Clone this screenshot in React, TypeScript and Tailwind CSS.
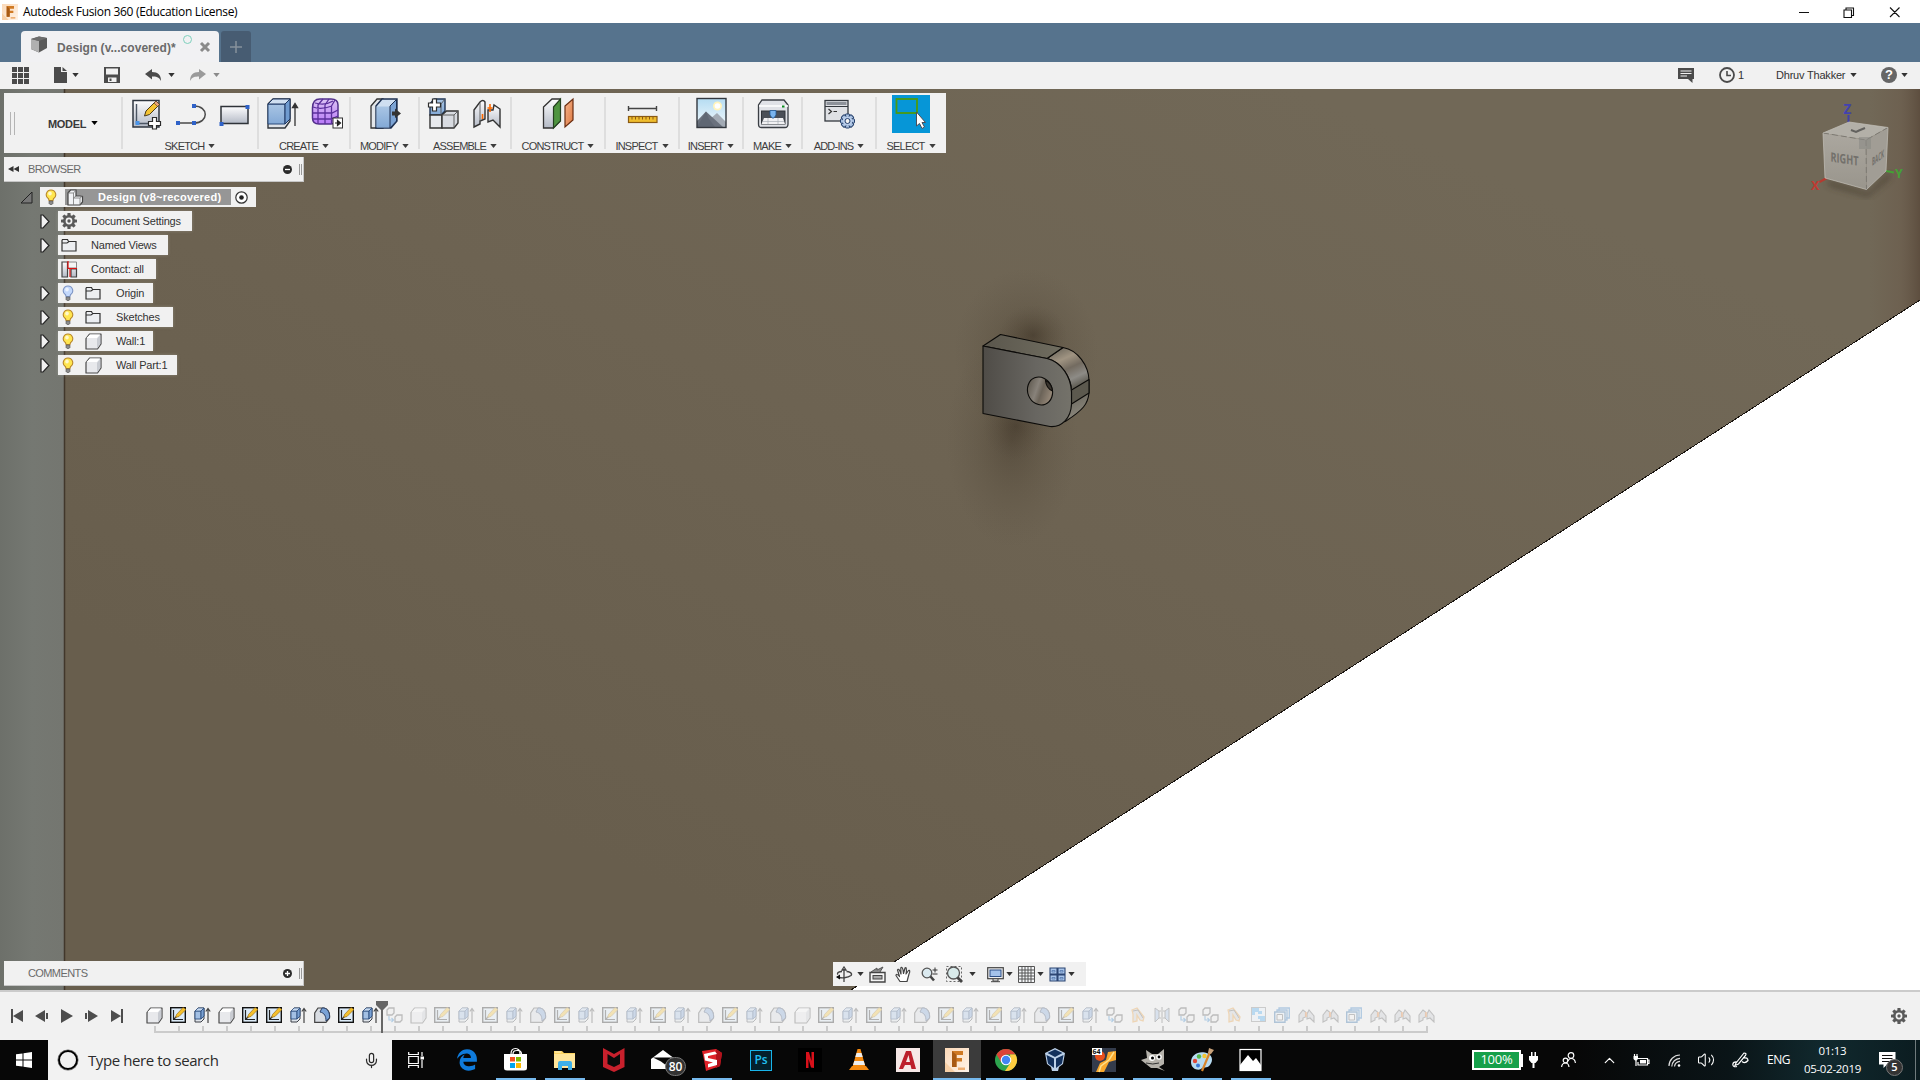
import React from 'react';
import { FaEdgeLegacy } from 'react-icons/fa';
import { Volume2, ChevronUp, Mic } from 'lucide-react';

type P = { className?: string };

const Caret = ({ className = '' }: P) => (
  <svg className={'shrink-0 ' + className} width="7" height="4" viewBox="0 0 7 4"><path d="M.3 0H6.700L3.500 4Z" fill="currentColor" /></svg>
);

const Gear = ({ size = 16 }: { size?: number }) => (
  <svg width={size} height={size} viewBox="-8 -8 16 16">
    <g fill="#5a5a5a">
      {[0, 45, 90, 135].map((a) => <rect key={a} x="-1.6" y="-8" width="3.2" height="16" rx="0.6" transform={`rotate(${a})`} />)}
      <circle r="6" />
    </g>
    <circle r="3.4" fill="#f1f1f1" />
    <circle r="1.7" fill="#5a5a5a" />
  </svg>
);

/* ---------- shared gradients ---------- */
const Defs = () => (
  <svg width="0" height="0" className="absolute">
    <defs>
      <linearGradient id="steel" x1="0" y1="0" x2="0" y2="1"><stop offset="0" stopColor="#fdfdfe" /><stop offset="1" stopColor="#b4bac6" /></linearGradient>
      <linearGradient id="blue" x1="0" y1="0" x2="0" y2="1"><stop offset="0" stopColor="#a9c5e4" /><stop offset="1" stopColor="#83a9d6" /></linearGradient>
      <linearGradient id="purple" x1="0" y1="0" x2="0" y2="1"><stop offset="0" stopColor="#dcc4f4" /><stop offset="1" stopColor="#b878f8" /></linearGradient>
      <linearGradient id="sky" x1="0" y1="0" x2="0" y2="1"><stop offset="0" stopColor="#b5dcf2" /><stop offset="1" stopColor="#f4fafd" /></linearGradient>
      <linearGradient id="orange" x1="0" y1="0" x2="1" y2="1"><stop offset="0" stopColor="#f6b48c" /><stop offset="1" stopColor="#dc7840" /></linearGradient>
      <linearGradient id="fusion" x1="0" y1="0" x2="1" y2="1"><stop offset="0" stopColor="#fbd9b8" /><stop offset="1" stopColor="#fff3e8" /></linearGradient>
    </defs>
  </svg>
);

/* ---------- ribbon icons (30 x 32) ---------- */
const R = ({ children, w = 30 }: { children: React.ReactNode; w?: number }) => (
  <svg width={w} height="32" viewBox={`0 0 ${w} 32`} className="overflow-visible">{children}</svg>
);
const NewSketch = () => (
  <R>
    <path d="M2 3.500H28V30H2Z" fill="url(#steel)" stroke="#2f3640" strokeWidth="1.5" />
    <path d="M5.5 7V26.5H20" fill="none" stroke="#4b5563" strokeWidth="1.4" />
    <rect x="4.5" y="24" width="4" height="4" fill="#4a94e8" />
    <path d="M15 14L25 4L28.5 7.5L18.5 17.5L13.5 19Z" fill="#f5c432" stroke="#4a3a18" strokeWidth="1" />
    <path d="M25 4L28.5 7.5L26.5 9.5L23 6Z" fill="#e9a37c" stroke="#4a3a18" strokeWidth=".6" />
    <path d="M21.5 20.5H25.5V24.5H29.5V28.5H25.5V32H21.5V28.5H17.5V24.5H21.5Z" fill="#fff" stroke="#2c2c2c" strokeWidth="1.2" />
  </R>
);
const LineArc = () => (
  <R>
    <path d="M3 26H19M19 9C34 9 34 26 19 26" fill="none" stroke="#4a4a4a" strokeWidth="1.5" />
    <path d="M1 24H5V28H1ZM17 24H21V28H17ZM17 7H21V11H17Z" fill="#2f62c8" />
  </R>
);
const Rect = () => (
  <R>
    <rect x="2" y="9.500" width="27" height="17" fill="url(#steel)" stroke="#2f3338" strokeWidth="1.5" />
    <path d="M.5 25H4.500V29H.5ZM26.500 8H30.500V12H26.500Z" fill="#2f62c8" />
  </R>
);
const Extrude = () => (
  <R>
    <path d="M1 7L6 2H23V24L18 31H1Z" fill="#dfe3e8" stroke="#33383e" strokeWidth="1.4" />
    <path d="M1 7H18V27H1Z" fill="url(#blue)" stroke="#2a4a7a" strokeWidth="1" />
    <path d="M1 7L6 2H23L18 7Z" fill="#cfdff1" stroke="#1c3560" strokeWidth="1" />
    <path d="M18 7L23 2V22L18 27Z" fill="#6f9bd0" stroke="#1c3560" strokeWidth="1" />
    <path d="M28 29V8M25.500 10.500L28 6.500L30.500 10.500Z" stroke="#333" strokeWidth="1.300" fill="#333" />
  </R>
);
const Form = () => (
  <R>
    <path d="M1.500 11Q1.500 2 9 2H20Q27 2 27 8V20Q27 27 20 27H8Q1.500 27 1.500 21Z" fill="url(#purple)" stroke="#52308a" strokeWidth="1.500" />
    <path d="M2 10Q10 13 21 9M2 16H21L27 13M2 22H20L27 19M7 7V27M14 8V27M20.500 9V27M4 6Q14 9 22 4M12 2L7 8M18 2L14 8M24 3L20.500 9" fill="none" stroke="#5b2f9c" strokeWidth="1.300" />
    <rect x="22" y="21" width="9.500" height="10" fill="#fff" stroke="#333" strokeWidth="1" />
    <path d="M24 26H28M26.500 23.500L29.500 26L26.500 28.500Z" stroke="#222" strokeWidth="1.200" fill="#222" />
  </R>
);
const PressPull = () => (
  <R>
    <path d="M1 9L7 2H13V31H1Z" fill="#e3e6ea" stroke="#333" strokeWidth="1.300" />
    <path d="M6 9L12 2H27V24L21 31H6Z" fill="#cfdff1" stroke="#1c2f50" strokeWidth="1.400" />
    <path d="M6.500 9.500H20V30.500H6.500Z" fill="url(#blue)" />
    <path d="M20 9L26.500 2.500V24L20 31Z" fill="#7ba3d4" stroke="#1c2f50" strokeWidth="1" />
    <path d="M22 14.500H25V11.500L31 16.500L25 21V18.500H22Z" fill="#333" />
  </R>
);
const NewComponent = () => (
  <R>
    <path d="M2 7L6 2H17V14L13 18H2Z" fill="url(#blue)" stroke="#1f3454" strokeWidth="1.400" />
    <path d="M2 18H14V31H2Z" fill="#e7e9ed" stroke="#333" strokeWidth="1.400" />
    <path d="M14 18L18.500 14H30V26L26 31H14Z" fill="#d8dbe1" stroke="#333" strokeWidth="1.400" />
    <path d="M14 18H26V31M26 18L30 14M13 7V18M13 7L17 2" fill="none" stroke="#555" strokeWidth=".9" />
    <path d="M4.500 2H8.500V6H12.500V10H8.500V14H4.500V10H.5V6H4.500Z" fill="#fff" stroke="#2c2c2c" strokeWidth="1.200" />
  </R>
);
const Joint = () => (
  <R>
    <path d="M2 13L8 5Q11 2 13 5V22L8 24V27L2 30Z" fill="url(#steel)" stroke="#333" strokeWidth="1.400" />
    <path d="M16 13H21L22 8L28 12V30L21 23L16 25Z" fill="url(#steel)" stroke="#333" strokeWidth="1.400" />
    <path d="M8 6V24" stroke="#666" />
    <path d="M18 7V15M15.500 11H20.500M10.500 17V22" stroke="#ff6a00" strokeWidth="1.600" />
  </R>
);
const Construct = () => (
  <R w={32}>
    <path d="M1.500 10L10 2H18V24L11 31H1.500Z" fill="url(#steel)" stroke="#333" strokeWidth="1.300" />
    <path d="M11.500 10L18.500 2V24L11.500 31Z" fill="#4e9440" stroke="#24401f" strokeWidth="1.200" />
    <path d="M23 9L31 2V23L23 30Z" fill="url(#orange)" stroke="#6a2c10" strokeWidth="1.200" />
  </R>
);
const Inspect = () => (
  <R>
    <path d="M1.500 11.500H29.500M1.500 9V14M29.500 9V14" stroke="#444" strokeWidth="1.400" />
    <rect x="1.500" y="19.500" width="28.500" height="6" fill="#efbd2d" stroke="#8a5a14" strokeWidth="1.200" />
    <path d="M5 20V22.500M8.500 20V22.500M12 20V22.500M15.500 20V22.500M19 20V22.500M22.500 20V22.500M26 20V22.500" stroke="#8a5a14" />
  </R>
);
const Insert = () => (
  <R>
    <rect x="1" y="1.500" width="29" height="29" fill="url(#sky)" />
    <circle cx="21.500" cy="9" r="4.500" fill="#fff4bd" /><circle cx="21.500" cy="9" r="2.800" fill="#fff" />
    <path d="M14 22L21 16L30 25V30H14Z" fill="#a3abb5" />
    <path d="M1 24L10 14.500L27 30H1Z" fill="#6a717d" />
    <path d="M10 14.500L13 22L19 30H1Z" fill="#59606c" opacity=".6" />
    <rect x="1" y="1.500" width="29" height="29" fill="none" stroke="#33383f" strokeWidth="1.400" />
  </R>
);
const Make = () => (
  <R>
    <path d="M4 3H26L30 8V27Q30 30.500 27 30.500H3Q.5 30.500 .5 27V8Z" fill="#e0e2e7" stroke="#3b3f45" strokeWidth="1.300" />
    <path d="M1 9H30" stroke="#fff" strokeWidth="1.500" />
    <rect x="3.500" y="14" width="23.500" height="13" fill="#4a4f57" stroke="#30343a" />
    <path d="M6 21H25L27 27H3.500Z" fill="#f1f1f3" />
    <path d="M12 13.500H18V18L16 21H14L12 18Z" fill="#79b4ee" stroke="#255a95" strokeWidth=".8" />
    <path d="M5 24.500H26M10 21V27M20 21V27" stroke="#a8adb5" strokeWidth=".7" />
    <rect x="24" y="8.500" width="2.500" height="2" fill="#0a8a1e" />
  </R>
);
const AddIns = () => (
  <R>
    <rect x="1" y="3.500" width="23" height="20.500" fill="#dfe1e5" stroke="#33383e" strokeWidth="1.300" />
    <rect x="2.500" y="5" width="20" height="3" fill="#8d929a" /><path d="M1 9.500H24" stroke="#33383e" />
    <path d="M4.500 12L7.500 14.500L4.500 17M9.500 14.500H13" fill="none" stroke="#333" strokeWidth="1.200" />
    <g transform="translate(23.500 24)">
      {[0, 45, 90, 135].map((a) => <rect key={a} x="-2.200" y="-7" width="4.400" height="14" rx="1" fill="#a8c0e0" stroke="#25406c" strokeWidth="1" transform={`rotate(${a})`} />)}
      <circle r="4.800" fill="#b9cdea" /><circle r="2.500" fill="#f1f1f1" stroke="#25406c" strokeWidth="1" />
    </g>
  </R>
);
const Select = () => (
  <div className="-mb-[4px] -mt-[2px] h-[38px] w-[38px] bg-[#0696d7]">
    <svg width="38" height="38" viewBox="0 0 38 38">
      <rect x="4.500" y="4" width="20.500" height="14" fill="none" stroke="#4c9a10" strokeWidth="1.800" />
      <path d="M24.500 17V31L27.500 28.500L30 33.500L32.500 32L30 27.500H33.500Z" fill="#fff" stroke="#4a4f5a" strokeWidth="1" />
    </svg>
  </div>
);

const groups: { name: string; w: string; icons: React.ReactNode[] }[] = [
  { name: 'SKETCH', w: 'w-[136px]', icons: [<NewSketch />, <LineArc />, <Rect />] },
  { name: 'CREATE', w: 'w-[92px]', icons: [<Extrude />, <Form />] },
  { name: 'MODIFY', w: 'w-[69px]', icons: [<PressPull />] },
  { name: 'ASSEMBLE', w: 'w-[92px]', icons: [<NewComponent />, <Joint />] },
  { name: 'CONSTRUCT', w: 'w-[94px]', icons: [<Construct />] },
  { name: 'INSPECT', w: 'w-[74px]', icons: [<Inspect />] },
  { name: 'INSERT', w: 'w-[64px]', icons: [<Insert />] },
  { name: 'MAKE', w: 'w-[59px]', icons: [<Make />] },
  { name: 'ADD-INS', w: 'w-[74px]', icons: [<AddIns />] },
  { name: 'SELECT', w: 'w-[70px]', icons: [<Select />] },
];

const Ribbon = () => (
  <div className="absolute left-1 top-1 flex h-[60px] w-[942px] bg-[#f1f1f1]">
    <div className="flex w-[117px] items-center">
      <div className="ml-1.5 h-[23px] w-[5px] border-x border-[#b4b4b4]" />
      <span className="ml-[33px] mt-0.5 text-[11px] font-bold tracking-[-0.3px] text-[#3a3a3a]">MODEL</span>
      <Caret className="ml-[5px]" />
    </div>
    {groups.map((g) => (
      <div key={g.name} className={'relative flex flex-col items-center pl-[2px] pt-1 ' + g.w}>
        <div className="absolute left-0 top-1 h-[52px] w-[2px] bg-[#dedede]" />
        <div className="flex h-8 gap-[14px]">{g.icons.map((ic, i) => <React.Fragment key={i}>{ic}</React.Fragment>)}</div>
        <div className="mt-[10px] flex items-center gap-1 text-[11px] leading-[14px] tracking-[-0.8px] text-[#3d3d3d]">{g.name}<Caret /></div>
      </div>
    ))}
  </div>
);

/* ---------- browser tree ---------- */
const Bulb = ({ off }: { off?: boolean }) => (
  <svg width="12" height="16" viewBox="0 0 12 16">
    <path d="M6 1A4.700 4.700 0 0 0 3.500 9.700L4 11.500H8L8.500 9.700A4.700 4.700 0 0 0 6 1Z" fill={off ? '#c3d8fb' : '#ffe650'} stroke={off ? '#7d94c4' : '#b8862a'} strokeWidth="1.100" />
    <ellipse cx="5" cy="4.500" rx="1.800" ry="2" fill="#fff" opacity=".7" />
    <path d="M4 12H8V14.500L7 15.500H5L4 14.500Z" fill="#8a8a8a" stroke="#555" strokeWidth=".6" />
  </svg>
);
const Folder = () => (
  <svg width="16" height="16" viewBox="0 0 16 16"><path d="M1 3.500V14H15V4.500H7.500L6.500 2.500H1.500ZM1 6H6L8 4.500" fill="#eceef1" stroke="#333" strokeWidth="1.200" /></svg>
);
const Box = () => (
  <svg width="17" height="17" viewBox="0 0 17 17">
    <path d="M1 5.500L4.500 1H16V11L12.500 16H1Z" fill="#e8e9ec" stroke="#4a4a4a" strokeWidth="1.200" strokeLinejoin="round" />
    <path d="M1.500 5L5 1.500H15L12 5Z" fill="#fff" /><path d="M12 5.500V15.500L15.300 11V2Z" fill="#c9ccd2" />
  </svg>
);
const Contact = () => (
  <svg width="17" height="17" viewBox="0 0 17 17">
    <path d="M1 1H6.500V16H1ZM10 8H15.500V16H10Z" fill="url(#steel)" stroke="#444" strokeWidth="1.200" />
    <path d="M7 1H15.500V7H7" fill="#f5f5f5" stroke="#888" /><path d="M7 0V7.500H16M9 8V16" fill="none" stroke="#e01010" strokeWidth="1.200" />
  </svg>
);
const Assembly = () => (
  <svg width="17" height="17" viewBox="0 0 17 17">
    <path d="M1 4L3.500 1H9V7H13L15.500 7.500V13L13 16H1Z" fill="#f2f3f5" stroke="#444" strokeWidth="1.200" /><path d="M6.500 16V9L9 7M1 4H6.500V9H13V16M13 9L15.500 7M6.500 4L9 1" fill="none" stroke="#777" strokeWidth=".8" />
  </svg>
);
const rows: { label: string; w: string; icon: React.ReactNode; bulb?: 'on' | 'off'; leaf?: boolean }[] = [
  { label: 'Document Settings', w: 'w-[134px]', icon: <Gear /> },
  { label: 'Named Views', w: 'w-[110px]', icon: <Folder /> },
  { label: 'Contact: all', w: 'w-[98px]', icon: <Contact />, leaf: true },
  { label: 'Origin', w: 'w-[95px]', icon: <Folder />, bulb: 'off' },
  { label: 'Sketches', w: 'w-[115px]', icon: <Folder />, bulb: 'on' },
  { label: 'Wall:1', w: 'w-[95px]', icon: <Box />, bulb: 'on' },
  { label: 'Wall Part:1', w: 'w-[119px]', icon: <Box />, bulb: 'on' },
];

const PanelBar = ({ title, open, className }: { title: string; open?: boolean; className: string }) => (
  <div className={'absolute left-1 flex h-[25px] w-[300px] items-center border-b border-r border-[#c6c6c6] bg-[#f1f1f1] ' + className}>
    <div className="ml-1 flex w-5">
      {open && <svg width="11" height="6" viewBox="0 0 11 6"><path d="M5.500 0V6L0 3ZM11 0V6L5.500 3Z" fill="#333" /></svg>}
    </div>
    <span className="text-[11px] tracking-[-0.6px] text-[#6a6a6a]">{title}</span>
    <svg className="ml-auto mr-[7px]" width="9" height="9" viewBox="0 0 9 9"><circle cx="4.500" cy="4.500" r="4.500" fill="#2b2b2b" /><path d={open ? 'M2 4.500H7' : 'M2 4.500H7M4.500 2V7'} stroke="#fff" strokeWidth="1.300" /></svg>
    <div className="mr-px h-[11px] w-[3px] border-x border-[#999]" />
  </div>
);

const Browser = () => (
  <div className="absolute left-0 top-[98px] flex w-[304px] flex-col gap-1 text-[11px] tracking-[-0.18px] text-[#333]">
    <div className="flex h-5 items-center">
      <svg className="ml-5" width="13" height="13" viewBox="0 0 13 13"><path d="M12 1V12H1Z" fill="#777" stroke="#222" /></svg>
      <div className="ml-[7px] flex h-5 w-[216px] items-center bg-[#f1f1f1]">
        <div className="ml-[5px]"><Bulb /></div>
        <div className="ml-[8px] flex h-4 w-[166px] items-center bg-[#969696]">
          <div className="ml-0.5"><Assembly /></div>
          <span className="ml-[14px] font-bold tracking-[0.24px] whitespace-nowrap text-white">Design (v8~recovered)</span>
        </div>
        <svg className="ml-1" width="13" height="13" viewBox="0 0 13 13"><circle cx="6.500" cy="6.500" r="5.700" fill="#fff" stroke="#333" strokeWidth="1.200" /><circle cx="6.500" cy="6.500" r="2.300" fill="#222" /></svg>
      </div>
    </div>
    {rows.map((r) => (
      <div key={r.label} className="flex h-5 items-center">
        <div className="ml-[40px] w-[18px]">
          {!r.leaf && <svg width="10" height="15" viewBox="0 0 10 15"><path d="M1 1H3L9 7.500L3 14H1Z" fill="#f1f1f1" stroke="#222" strokeWidth="1.200" /></svg>}
        </div>
        <div className={'flex h-5 items-center bg-[#f1f1f1] shadow-[0_0_3px_rgba(200,200,190,0.35)] ' + r.w}>
          {r.bulb && <div className="ml-[4px] w-[20px]"><Bulb off={r.bulb === 'off'} /></div>}
          <div className="ml-[3px] flex w-[17px]">{r.icon}</div>
          <span className={'whitespace-nowrap ' + (r.bulb ? 'ml-[14px]' : 'ml-[13px]')}>{r.label}</span>
        </div>
      </div>
    ))}
  </div>
);

/* ---------- 3D scene ---------- */
const Scene = () => (
  <svg className="block" width="1920" height="901" viewBox="0 89 1920 901">
    <defs>
      <linearGradient id="wall" gradientUnits="userSpaceOnUse" x1="1300" y1="89" x2="900" y2="990"><stop offset="0" stopColor="#716857" /><stop offset=".5" stopColor="#6d6352" /><stop offset="1" stopColor="#685e4d" /></linearGradient>
      <linearGradient id="wallR" x1="0" x2="1"><stop offset="0" stopColor="#6a5a4a" stopOpacity="0" /><stop offset=".6" stopColor="#6a5a4a" stopOpacity=".5" /><stop offset="1" stopColor="#5a4a3b" stopOpacity=".85" /></linearGradient>
      <linearGradient id="side" x1="0" x2="1"><stop offset="0" stopColor="#6d706a" /><stop offset=".5" stopColor="#757872" /><stop offset="1" stopColor="#747670" /></linearGradient>
      <radialGradient id="sh"><stop offset="0" stopColor="#3a2f22" stopOpacity=".8" /><stop offset=".5" stopColor="#453a2b" stopOpacity=".35" /><stop offset="1" stopColor="#51463a" stopOpacity="0" /></radialGradient>
      <linearGradient id="front" x1="0" x2="1"><stop offset="0" stopColor="#4f4c47" /><stop offset=".6" stopColor="#686661" /><stop offset="1" stopColor="#74726a" /></linearGradient>
      <linearGradient id="topf" x1="0" x2="1"><stop offset="0" stopColor="#5a564c" /><stop offset="1" stopColor="#706d60" /></linearGradient>
      <linearGradient id="round" gradientUnits="userSpaceOnUse" x1="1052" y1="350" x2="1082" y2="415"><stop offset="0" stopColor="#6b665b" /><stop offset=".18" stopColor="#a09482" /><stop offset=".33" stopColor="#736b60" /><stop offset=".48" stopColor="#8d8b86" /><stop offset=".6" stopColor="#625f56" /><stop offset="1" stopColor="#8b877c" /></linearGradient>
      <linearGradient id="hole" x1="0" y1="0" x2="1" y2="1"><stop offset=".1" stopColor="#5d574d" /><stop offset=".4" stopColor="#88827a" /><stop offset=".55" stopColor="#6b6358" /><stop offset=".8" stopColor="#918475" /><stop offset="1" stopColor="#75695c" /></linearGradient>
      <filter id="soft"><feGaussianBlur stdDeviation="3" /></filter>
      <linearGradient id="cube" x1="0" y1="0" x2="0" y2="1"><stop offset="0" stopColor="#aba79f" /><stop offset="1" stopColor="#99958c" /></linearGradient>
    </defs>
    <rect y="89" width="1920" height="901" fill="#fff" />
    <path d="M0 89H1920V300L928 940L851 990H0Z" fill="url(#wall)" />
    <path d="M1870 89H1920V300L1870 332Z" fill="url(#wallR)" />
    <path d="M1920 300L928 940L851 990" fill="none" stroke="#1a1510" strokeWidth="1" shapeRendering="crispEdges" />
    <rect y="89" width="64" height="901" fill="url(#side)" />
    <path d="M64.500 89V990" stroke="#41372b" strokeWidth="1.500" />

    <ellipse cx="1026" cy="352" rx="72" ry="84" fill="url(#sh)" opacity=".5" />
    <ellipse cx="1033" cy="335" rx="34" ry="30" fill="url(#sh)" opacity=".6" />
    <ellipse cx="1012" cy="440" rx="66" ry="108" fill="url(#sh)" opacity=".5" />
    <ellipse cx="1016" cy="426" rx="34" ry="34" fill="url(#sh)" opacity=".5" />
    <g stroke="#0c0b09" strokeWidth="1.100" strokeLinejoin="round">
      <path d="M1047 358.500L1063 347.500C1078 350 1088.500 366 1089 380V393C1088 404 1083 410 1066 421C1060 425 1071 410 1071.500 404V390C1071 378 1062 362 1047 358.500Z" fill="url(#round)" />
      <path d="M1071.500 390L1089 379.500V393L1071.500 404Z" fill="#5c594e" />
      <path d="M983 346L1000.500 334.500L1063 347.500L1047 358.500Z" fill="url(#topf)" />
      <path d="M983 346L1047 358.500C1062 362 1071 378 1071.500 392V404C1071 418 1062 427.500 1050 426.500L983 413.500Z" fill="url(#front)" />
      <ellipse cx="1040" cy="391" rx="12.300" ry="14.200" transform="rotate(-22 1040 391)" fill="url(#hole)" />
      <path d="M1045.500 380.500C1046 386 1049 389.500 1052.500 391C1052 386 1049 382 1045.500 380.500Z" fill="#3a352e" />
    </g>

    <path d="M1826 180L1868 193L1890 172L1890 178L1868 197L1830 186Z" fill="#3b3226" opacity=".6" filter="url(#soft)" />
    <path d="M1848.500 115V123" stroke="#4040a8" strokeWidth="2" />
    <path d="M1819.500 182L1827 178" stroke="#b53a30" strokeWidth="2" />
    <path d="M1886 171L1894 172.500" stroke="#45a035" strokeWidth="2" />
    <path d="M1823 133L1849 122L1888 127.500L1866 140Z" fill="#b3b0a8" />
    <path d="M1823 133L1866 140L1866.500 189.500L1825 178Z" fill="url(#cube)" />
    <path d="M1866 140L1888 127.500L1886 171L1866.500 189.500Z" fill="#a19d95" />
    <path d="M1823 133L1866 140L1888 127.500M1866 140L1866.500 189.500" fill="none" stroke="#7d7a73" strokeDasharray="6 3" />
    <path d="M1823 133L1849 122L1888 127.500L1886 171L1866.500 189.500L1825 178Z" fill="none" stroke="#c4c1ba" strokeWidth=".7" />
    <path d="M1859 137H1871V149H1859Z" fill="#8b8a85" opacity=".6" />
    <path d="M1851 130L1856 132L1859 130.500L1865 128" stroke="#62615e" strokeWidth="2" fill="none" />
    <g fontFamily="Open Sans, sans-serif" fontWeight="700">
      <text transform="matrix(1 .15 0 1 1830.500 161.500)" fontSize="13" fill="#72706b" textLength="28" lengthAdjust="spacingAndGlyphs">RIGHT</text>
      <text transform="matrix(.8 -.6 0 1 1872 166)" fontSize="11" fill="#72706b" textLength="15" lengthAdjust="spacingAndGlyphs">BACK</text>
      <text x="1843.500" y="114" fontSize="13.500" fill="#4242b0">Z</text>
      <text x="1811" y="189.500" fontSize="12.500" fill="#c03a32">X</text>
      <text x="1895" y="178" fontSize="12.500" fill="#46a038">Y</text>
    </g>
  </svg>
);

/* ---------- navigation bar ---------- */
const N = ({ w, ml = '', children }: { w: string; ml?: string; children: React.ReactNode }) => <div className={`flex shrink-0 justify-center ${w} ${ml}`}>{children}</div>;
const NavBar = () => (
  <div className="absolute left-[833px] top-[873px] flex h-6 w-[253px] items-center bg-[#f1f1f1] text-[#333]">
    <N w="w-[22px]"><svg width="17" height="17" viewBox="0 0 17 17"><path d="M8 16V3M6 4L8 1L10 4Z" fill="#fff" stroke="#444" strokeWidth="1.300" /><path d="M1 11C5 12.500 12 12 15 9.500C17 7 13 5.500 10.500 5.500M6 5.500C3 5.500 .5 7 2 8.500" fill="none" stroke="#444" strokeWidth="1.400" /><path d="M0 11L4 8.500V13.500Z" fill="#111" /></svg></N>
    <N w="w-[10px]"><Caret /></N>
    <N w="w-[24px]"><svg width="17" height="17" viewBox="0 0 17 17"><path d="M1 6.500H16V16H1Z" fill="#f6f6f6" stroke="#444" strokeWidth="1.400" /><rect x="4" y="9.500" width="9" height="3.500" fill="#aaa" stroke="#444" /><path d="M2 6L8 2V4L14 1L11 6" fill="#888" stroke="#555" /></svg></N>
    <N w="w-[28px]"><svg width="17" height="17" viewBox="0 0 17 17"><path d="M5 15.500L1 9.500C1 8 2.500 8 4.500 10.500L2.500 4C3 2.500 4.500 3 6 8L5.800 2C6.500 .5 8 1 8.500 7.500L10 2C11 1 12 2 11 8L13.500 4.500C14.500 4 15.500 5 14 8L12 15.500Z" fill="#fff" stroke="#444" strokeWidth="1.200" strokeLinejoin="round" /></svg></N>
    <N w="w-[24px]"><svg width="17" height="17" viewBox="0 0 17 17"><circle cx="6" cy="7" r="4.800" fill="#dbeaf0" stroke="#555" strokeWidth="1.300" /><path d="M9.500 10.500L13 14.500" stroke="#444" strokeWidth="2.600" /><path d="M11.500 4H16.500M14 1.500V6.500M11.500 8H16.500" stroke="#333" /></svg></N>
    <N w="w-[27px]"><svg width="17" height="17" viewBox="0 0 17 17"><rect x=".5" y=".5" width="15" height="15" fill="none" stroke="#666" strokeDasharray="2 2" /><circle cx="7.500" cy="7" r="6" fill="#d8eaea" stroke="#555" strokeWidth="1.300" /><path d="M11.500 11.500L16 16" stroke="#444" strokeWidth="2.800" /></svg></N>
    <N w="w-2"><Caret /></N>
    <N w="w-[18px]" ml="ml-[10px]"><svg width="17" height="17" viewBox="0 0 17 17"><rect x=".7" y="1.700" width="15.600" height="11" fill="#eee" stroke="#444" strokeWidth="1.200" /><rect x="3" y="4" width="11" height="6.500" fill="#a4c2ea" stroke="#2c4f86" /><path d="M6 13V15H11V13M4 15.700H13" stroke="#444" fill="none" /></svg></N>
    <N w="w-2" ml="ml-px"><Caret /></N>
    <N w="w-[18px]" ml="ml-[4px]"><svg width="17" height="17" viewBox="0 0 17 17"><path d="M.5 .5H16.500V16.500H.5ZM.5 4H16.500M.5 7H16.500M.5 10H16.500M.5 13H16.500M4 .5V16.500M7 .5V16.500M10 .5V16.500M13 .5V16.500" fill="#f4f6f8" stroke="#555" /></svg></N>
    <N w="w-2" ml="ml-px"><Caret /></N>
    <N w="w-[19px]" ml="ml-[4px]"><svg width="17" height="15" viewBox="0 0 17 15"><path d="M1 1H8V7H1ZM9 1H16V7H9ZM1 8H8V14H1ZM9 8H16V14H9Z" fill="#a9c5ea" stroke="#2c4673" strokeWidth="1.100" /><path d="M3 3.500H6V5H3ZM11 3.500H14V5H11ZM3 10.500H6V12H3ZM11 10.500H14V12H11Z" fill="none" stroke="#4a70a8" strokeWidth=".7" /></svg></N>
    <N w="w-2"><Caret /></N>
  </div>
);

/* ---------- timeline ---------- */
const TimelineIcon = ({ kind }: { kind: string }) => {
  switch (kind) {
    case 'b': return <Box />;
    case 's': return <svg width="16" height="16" viewBox="0 0 16 16"><rect x=".7" y=".7" width="14.600" height="14.600" fill="#dcebf8" stroke="#111" strokeWidth="1.400" /><path d="M3.500 3V12.500H13M3.500 12.500L7 9" fill="none" stroke="#222" strokeWidth="1.200" /><path d="M6.500 7.500L13 .5L16 2.500L9 9.500L5.500 10.500Z" fill="#f5c02c" stroke="#8c6210" strokeWidth=".6" /></svg>;
    case 'e': return <svg width="17" height="16" viewBox="0 0 17 16"><path d="M1 4L4 1H10V12L7 15H1Z" fill="#dfe4ea" stroke="#3c4048" /><path d="M1 4H7V12H1Z" fill="#a3c0e4" stroke="#2d4e80" strokeWidth=".9" /><path d="M1 4L4 1H10L7 4Z" fill="#c8daf0" stroke="#2d4e80" strokeWidth=".7" /><path d="M7 4L10 1V9L7 12Z" fill="#7aa2d4" stroke="#2d4e80" strokeWidth=".9" /><path d="M14 16V2M11.800 4.500L14 1.500L16.200 4.500" fill="none" stroke="#444" strokeWidth="1.200" /></svg>;
    case 'f': return <svg width="17" height="16" viewBox="0 0 17 16"><path d="M.7 15.300V6L4 1H10C14 2 16 6 15.500 11L12 15.300Z" fill="#d9dde3" stroke="#444" strokeWidth="1.200" /><path d="M8 1H10C14 2 16 6 15.500 11L12 14C12 9 10.500 6 6 5Z" fill="#7aa2d6" stroke="#2a3f66" /></svg>;
    case 'c': return <svg width="17" height="17" viewBox="0 0 17 17"><path d="M1 3L3 1H8V6L6 8H1ZM9 10L11 8H16V13L14 15H9Z" fill="#eee" stroke="#444" strokeWidth="1.300" /><path d="M3 9V13H7M5.500 11L7.500 13L5.500 15" fill="none" stroke="#2c80c8" strokeWidth="1.200" /></svg>;
    case 'j': return <svg width="17" height="16" viewBox="0 0 17 16"><path d="M1 8L5 3L7.500 5V10L5 11V13L1 15ZM9 7L11 3L16 9V15L12 11L9 12Z" fill="#c6c9cf" stroke="#555" strokeWidth="1.100" /><path d="M8 5V10" stroke="#f07820" strokeWidth="1.600" /></svg>;
    case 'p': return <svg width="16" height="16" viewBox="0 0 16 16"><path d="M2 3L7 1L14 10L13 14L10 13L7 8V14L3 15V7Z" fill="#c9ccd2" stroke="#e8962e" strokeWidth="1.300" /><path d="M3 4L8 3L13 11" stroke="#555" fill="none" /></svg>;
    case 'm': return <svg width="16" height="16" viewBox="0 0 16 16"><path d="M1 1L5 4V11L1 15ZM15 1L11 4V11L15 15ZM5 4H7M11 4H9M5 11H7M11 11H9" fill="#9fbfe4" stroke="#555" /><path d="M8 0V16" stroke="#444" /></svg>;
    case 'z': return <svg width="15" height="15" viewBox="0 0 15 15"><rect x=".5" y=".5" width="14" height="14" fill="#e8f4fd" stroke="#777" /><path d="M1 1H8V4H11V7H7V5H4V8H1ZM7 9H14V14H9V12H7Z" fill="#3aa5f0" /></svg>;
    default: return <svg width="16" height="16" viewBox="0 0 16 16"><path d="M5 4V1H15.300V11H12M3 6V3H13V13H10" fill="none" stroke="#1e6fbc" strokeWidth="1.300" /><path d="M.7 5H11V15.300H.7Z" fill="#e4eefa" stroke="#1e5f9c" strokeWidth="1.400" /><path d="M3 7.500H8.500V13H3Z" fill="#f6f6f6" stroke="#555" /></svg>;
  }
};
const sequence = ('bsebssefse' + 'cbse' + 'sefsesesefsefbsesefs' + 'esefsecpmccpzajjajjj').split('');

const Timeline = () => (
  <div className="relative flex h-[50px] border-t-2 border-[#cbcbcb] bg-[#f1f1f1]">
    <div className="ml-[10px] mt-[17px] flex w-[132px] gap-[10px] text-[#4d4d4d]">
      <svg width="14" height="14" viewBox="0 0 14 14"><path d="M1 0H3V14H1ZM13 1V13L3 7Z" fill="currentColor" /></svg>
      <svg className="ml-px" width="15" height="14" viewBox="0 0 15 14"><path d="M10 1V13L0 7ZM11 4H13V10H11Z" fill="currentColor" /></svg>
      <svg className="-ml-px" width="15" height="14" viewBox="0 0 15 14"><path d="M2 0V14L14 7Z" fill="currentColor" /></svg>
      <svg className="ml-px" width="15" height="14" viewBox="0 0 15 14"><path d="M3 1V13L13 7ZM0 4H2V10H0Z" fill="currentColor" /></svg>
      <svg width="14" height="14" viewBox="0 0 14 14"><path d="M1 1V13L11 7ZM11 0H13V14H11Z" fill="currentColor" /></svg>
    </div>
    <div className="flex">
      {sequence.map((k, i) => (
        <div key={i} className="flex w-6 flex-col items-center">
          <div className={'mt-[15px] flex h-[17px] items-start ' + (i > 9 ? 'opacity-30' : '')}><TimelineIcon kind={k} /></div>
          <div className="ml-[2px] mt-[2px] h-[5px] w-[2px] bg-[#cbcbcb]" />
          <div className={'h-[2px] bg-[#cbcbcb] ' + (i === 0 ? 'w-3 self-end' : i === 53 ? 'w-[14px] self-start' : 'w-full')} />
        </div>
      ))}
    </div>
    <svg className="absolute left-[376px] top-[9px]" width="12" height="32" viewBox="0 0 12 32"><path d="M0 0H12V4L7 9V32H5V9L0 4Z" fill="#666" /></svg>
    <div className="ml-auto mr-[13px] mt-[16px]"><Gear /></div>
  </div>
);

/* ---------- taskbar ---------- */
const FusionIcon = ({ size = 24 }: { size?: number }) => (
  <svg width={size} height={size} viewBox="0 0 24 24"><rect width="24" height="24" fill="url(#fusion)" /><path d="M0 14L10 24H0Z" fill="#f7cfa6" /><path d="M7 3H18V7H11.500V10H17V13.500H11.500V19H7Z" fill="#d07a24" /><path d="M7 3L11.500 7V19H7Z" fill="#a85a14" /><path d="M13 19.500H20V22H13Z" fill="#eeae72" /></svg>
);
const Win = ({ children }: { children: React.ReactNode }) => <svg width="24" height="24" viewBox="0 0 24 24" className="overflow-visible">{children}</svg>;

const Badge = ({ n, className }: { n: string; className: string }) => (
  <div className={'absolute flex items-center justify-center rounded-full border border-[#777] bg-[#333] font-["Open_Sans",sans-serif] font-semibold text-white ' + className}>{n}</div>
);

const apps: { icon: React.ReactNode; run?: boolean; active?: boolean }[] = [
  { icon: <FaEdgeLegacy size={22} color="#0f7bdc" /> },
  { run: true, icon: <Win><path d="M0 6H23V20Q23 22.500 20 22.500H3Q0 22.500 0 20Z" fill="#fff" /><path d="M7 6Q7 .5 11.500 .5T16 6M9 6Q9 2.500 12.500 2.500Q17.500 2 17.500 6" fill="none" stroke="#fff" strokeWidth="1.200" /><path d="M6 9H11V13.500H6Z" fill="#f25022" /><path d="M12 9H17V13.500H12Z" fill="#7fba00" /><path d="M6 15H11V20H6Z" fill="#00a4ef" /><path d="M12 15H17V20H12Z" fill="#ffb900" /></Win> },
  { run: true, icon: <Win><path d="M1 3H9L11 5H22V20H1Z" fill="#fcd462" /><path d="M1 6H22V20H1Z" fill="#ffe59a" /><path d="M2 4H8" stroke="#fff3c8" /><path d="M5 22V15Q5 13 7 13H17Q19 13 19 15V22H15V18H9V22Z" fill="#3fb0e8" /></Win> },
  { icon: <Win><path d="M1 0L12 6L22.500 0V19L12 24L1 19Z" fill="#c8202c" /><path d="M5.500 6L12 10L18 6V16L12 19L5.500 16Z" fill="#0a0a0a" /></Win> },
  { icon: <div className="relative"><Win><path d="M0 11L12 2L24 11V21H0Z" fill="#fff" /><path d="M2 9.500H22L14 16.500L10 13.500Z" fill="#080808" /></Win><Badge n="80" className="left-[14px] top-[9px] h-[19px] w-[21px] text-[12px]" /></div> },
  { run: true, icon: <Win><path d="M2 3L16 1L22 5L20 18L6 23L4 12Z" fill="#e0222a" /><path d="M16 1L22 5L20 18L16 20Z" fill="#b0121c" /><path d="M4 6L15 3.500L17 6L8 8V10L17 12V17L8 19.500V16L13 14.500L5 12.500Z" fill="#fff" /></Win> },
  { icon: <div className="flex h-[21px] w-[22px] items-center justify-center border-[1.5px] border-[#18b4ea] bg-[#04202c] font-['Open_Sans',sans-serif] text-[12px] font-semibold text-[#20c0f4]">Ps</div> },
  { icon: <Win><rect width="24" height="24" fill="#000" /><path d="M8 4H11L13.500 13V4H16V20L13 19.500L10.500 11V20L8 20Z" fill="#d8101a" /></Win> },
  { icon: <Win><path d="M5 18H19L22 22H2Z" fill="#f58a10" /><path d="M10.500 1H13.500L18.500 19H5.500Z" fill="#f58a10" /><path d="M9.500 5H14.500L15.700 9H8.300ZM7.300 13H16.700L18 17H6Z" fill="#eee" /></Win> },
  { icon: <Win><rect width="24" height="24" fill="#f6e8e6" /><path d="M3 21L10 3H15L20 21H15.500L14.500 17H9L7 21ZM10 14H14L12.500 7Z" fill="#bc1f2b" fillRule="evenodd" /></Win> },
  { run: true, active: true, icon: <FusionIcon /> },
  { run: true, icon: <Win><circle cx="12" cy="12" r="11" fill="#2da44e" /><path d="M2.500 6.500A11 11 0 0 1 21.500 6.500H12L7 14Z" fill="#db4437" /><path d="M21.500 6.500A11 11 0 0 1 11 23L17 14L16 6.500Z" fill="#ffcd40" /><circle cx="12" cy="12" r="5.300" fill="#fff" /><circle cx="12" cy="12" r="4.200" fill="#4285f4" /></Win> },
  { run: true, icon: <Win><path d="M2 5L12 0L22 5L20 16L16 19L15 23H9L8 19L4 16Z" fill="#bcd0e8" /><path d="M4.500 5L12 1.500L19.500 5L12 9ZM3.500 7L11 10.500V20L5 15.500ZM20.500 7L13 10.500V20L19 15.500Z" fill="#12305c" /></Win> },
  { run: true, icon: <Win><rect width="24" height="24" fill="#343c4c" /><path d="M24 3V12L17 14L12 24H4L8 15L14 12L16 4Z" fill="#f9a82c" /><path d="M22 4L17 12L9 18L7 24" fill="none" stroke="#ffe08a" strokeWidth="1.500" /><circle cx="8" cy="8" r="5" fill="#e8501c" /><rect x="0" y="0" width="10" height="7" fill="#fff" /><text x=".5" y="6" fontSize="7" fontWeight="700" fill="#111" fontFamily="Open Sans, sans-serif">64</text></Win> },
  { run: true, icon: <Win><path d="M5 2L11 6H17L23 1V16L18 19L24 23L16 20H10L5 16L0 12L6 10Z" fill="#b5b2ab" /><circle cx="11" cy="10" r="3" fill="#fff" /><circle cx="18" cy="9" r="2.800" fill="#fff" /><circle cx="11.500" cy="10" r="1.500" /><circle cx="18" cy="9" r="1.400" /><path d="M5 15Q12 17 18 15" stroke="#333" fill="none" /></Win> },
  { run: true, icon: <Win><path d="M1 14C1 7 8 3 15 4.500C22 6 24 12 20 17C17 21 13 18 11 21C8 23 1 21 1 14Z" fill="#b7dcf2" /><circle cx="5" cy="13" r="2.200" fill="#e04a3a" /><circle cx="9" cy="8.500" r="2.200" fill="#53b848" /><circle cx="14.500" cy="8" r="2.200" fill="#f4c430" /><circle cx="8" cy="17.500" r="2" fill="#3b78d8" /><path d="M12 23L20 4" stroke="#d8862c" strokeWidth="2.200" /><path d="M18 5L19 0L24 2L21 6Z" fill="#c9a27a" /></Win> },
  { run: true, icon: <Win><rect x="1" y="1.500" width="21" height="21" fill="#000" stroke="#fff" strokeWidth="1.200" /><path d="M1 17L9 7L14 13L17 10L22 17V22H1Z" fill="#fff" /></Win> },
];

const Taskbar = () => (
  <div className="relative flex h-10 items-center bg-[linear-gradient(90deg,#070707_0,#070707_82%,#0a1417_90%,#11292e_95%,#0b1c20_100%)] font-['Open_Sans',sans-serif] text-white">
    <div className="flex w-12 justify-center"><svg width="16" height="16" viewBox="0 0 16 16"><path d="M0 2.300L6.500 1.400V7.500H0ZM7.500 1.200L16 0V7.500H7.500ZM0 8.500H6.500V14.600L0 13.700ZM7.500 8.500H16V16L7.500 14.800Z" fill="#fff" /></svg></div>
    <div className="flex h-10 w-[344px] items-center bg-[#f2f2f2] text-[#2b2b2b]">
      <div className="ml-[10px] h-5 w-5 rounded-full border-[2.5px] border-black shadow-[0_0_0_0.5px_#666]" />
      <span className="ml-[10px] text-[15px] tracking-[-0.4px]">Type here to search</span>
      <Mic className="ml-auto mr-[12px]" size={17} strokeWidth={1.700} />
    </div>
    <div className="flex w-[51px] justify-start pl-4"><svg width="16" height="16" viewBox="0 0 16 16"><path d="M.7 0V2.500H10.300V0M.7 16V13.500H10.300V16M.7 4.500H10.300V11.500H.7ZM14 0V4M14 8V16" fill="none" stroke="#fff" strokeWidth="1.200" /><path d="M12.500 4.500H16V7.500H12.500Z" fill="#fff" /></svg></div>
    <div className="flex gap-px">
      {apps.map((a, i) => (
        <div key={i} className={'flex h-10 w-12 flex-col items-center justify-between pt-2 ' + (a.active ? 'bg-[#3b3b3b]' : '')}>
          <div className="flex h-6 items-center">{a.icon}</div>
          {a.run && <div className={'h-[2px] bg-[#76b9ed] ' + (a.active ? 'w-12' : 'w-10')} />}
        </div>
      ))}
    </div>
    <div className="ml-auto mr-[53px] flex h-10 w-[395px] items-center">
      <div className="flex h-[20px] w-[49px] items-center justify-center border-2 border-white bg-[#16a04a] text-[13px] tracking-[-0.2px]">100%</div>
      <div className="h-[13px] w-[2px] bg-white" />
      <svg className="ml-[6px]" width="9" height="16" viewBox="0 0 9 16"><path d="M2 0H3.500V4H5.500V0H7V4H9V8L6.500 11H5.500V16H3.500V11H2.500L0 8V4H2Z" fill="#fff" /></svg>
      <svg className="ml-[23px]" width="15" height="16" viewBox="0 0 15 16" fill="none" stroke="#fff" strokeWidth="1.200"><circle cx="10" cy="3.500" r="2.800" /><circle cx="4.500" cy="8.500" r="2.300" /><path d="M.6 15Q1 11 4.500 11Q7.500 11 8 15M7 9Q8 6.500 10 6.500Q14 6.500 14.400 11" /></svg>
      <ChevronUp className="ml-[25px]" size={17} strokeWidth={1.700} />
      <svg className="ml-[15px]" width="17" height="13" viewBox="0 0 17 13"><path d="M5 4.500H14.500V11H5V8M14.500 6H16V9.500H14.500M1.500 0V2M4 0V2M3 6V12" fill="none" stroke="#fff" strokeWidth="1.200" /><path d="M.5 2H5V5L3.500 6.500H2L.5 5ZM7 6H13V9.500H7Z" fill="#fff" /></svg>
      <svg className="ml-[18px]" width="13" height="13" viewBox="0 0 13 13" fill="none" stroke="#ddd" strokeWidth="1.200"><path d="M1 12A11 11 0 0 1 12 1M3.800 12.500A8.500 8.500 0 0 1 12 4.300M6.500 12.500A6 6 0 0 1 12 7.300" /><circle cx="11" cy="11.500" r="1.300" fill="#fff" stroke="none" /></svg>
      <Volume2 className="ml-[16px]" size={18} strokeWidth={1.400} />
      <svg className="ml-[17px]" width="17" height="16" viewBox="0 0 17 16" fill="none" stroke="#fff" strokeWidth="1.200"><path d="M4 11L12 1Q15 1 13.500 3.500L6.500 12L3 13.500ZM5 10Q1 9.500 .8 12.500Q1 15.500 5 14.500M11 6Q16 5 16 8.500Q13 12 10 9.500" /></svg>
      <span className="ml-[18px] text-[12px] tracking-[-0.5px]">ENG</span>
      <div className="ml-[13px] flex w-[59px] flex-col items-center text-[11.5px] leading-[18px] tracking-[-0.3px]"><span>01:13</span><span className="whitespace-nowrap">05-02-2019</span></div>
    </div>
    <div className="absolute bottom-0 right-0 h-10 w-[53px]">
      <svg className="ml-3 mt-3" width="17" height="16" viewBox="0 0 17 16"><path d="M0 0H16.500V12.500H8L4.500 16V12.500H0Z" fill="#fff" /><path d="M3 3.500H13.500M3 6.500H13.500M3 9.500H13.500" stroke="#111" strokeWidth="1.100" /></svg>
      <Badge n="5" className="left-[19px] top-[19px] h-[17px] w-[17px] text-[11px]" />
      <div className="absolute right-[4px] top-0 h-10 w-px bg-[#6f7a7c]" />
    </div>
  </div>
);

/* ---------- top bars ---------- */
const TitleBar = () => (
  <div className="flex h-[23px] items-center bg-white">
    <div className="ml-[2px]"><FusionIcon size={16} /></div>
    <span className="ml-[5px] font-['Open_Sans',sans-serif] text-[12px] tracking-[-0.32px] text-black">Autodesk Fusion 360 (Education License)</span>
    <svg className="ml-auto mr-[19px]" width="103" height="12" viewBox="0 0 103 12" fill="none" stroke="#111" strokeWidth="1.100">
      <path d="M1 6.500H11M46 4H53.500V11.500H46ZM48 4V2H55.500V9.500H53.500M92 1.500L101.500 11M101.500 1.500L92 11" />
    </svg>
  </div>
);

const Tabs = () => (
  <div className="flex h-[39px] items-end bg-[#56738d]">
    <div className="ml-[21px] flex h-[31px] w-[198px] items-center rounded-t-[4px] bg-[#f1f1f3]">
      <svg className="ml-[9px] mb-1" width="18" height="17" viewBox="0 0 18 17"><path d="M1 3L9 .5L17 2V12L9 16.500L1 13Z" fill="#5a5a5a" /><path d="M1 3L9 5V16.500L1 13Z" fill="#b0b0b0" /><path d="M1 3L9 .5L17 2L9 5Z" fill="#6d6d6d" /></svg>
      <span className="ml-[9px] mt-[2px] text-[12px] font-bold tracking-[0.04px] text-[#6a6a6a] whitespace-nowrap">Design (v...covered)*</span>
      <div className="ml-[7px] mb-[14px] h-[9px] w-[9px] shrink-0 rounded-full border-[1.5px] border-[#7ed0bd]" />
      <svg className="ml-auto mr-[8px]" width="12" height="12" viewBox="0 0 12 12"><path d="M2 2L10 10M10 2L2 10" stroke="#8a8a8a" strokeWidth="3" /></svg>
    </div>
    <div className="ml-[2px] flex h-[31px] w-[30px] items-center justify-center rounded-t-[3px] bg-[#475c72]">
      <svg width="12" height="12" viewBox="0 0 12 12"><path d="M0 6H12M6 0V12" stroke="#87919c" strokeWidth="1.500" /></svg>
    </div>
  </div>
);

const QuickBar = () => (
  <div className="flex h-[27px] items-center bg-[#f1f1f1] pb-px text-[#333]">
    <svg className="ml-3" width="17" height="17" viewBox="0 0 17 17"><path d="M0 0H5V5H0ZM6 0H11V5H6ZM12 0H17V5H12ZM0 6H5V11H0ZM6 6H11V11H6ZM12 6H17V11H12ZM0 12H5V17H0ZM6 12H11V17H6ZM12 12H17V17H12Z" fill="#4b4b4b" /></svg>
    <svg className="ml-[25px]" width="13" height="16" viewBox="0 0 13 16"><path d="M0 0H7V5H13V16H0ZM8.500 0L13 4H8.500Z" fill="#4b4b4b" /></svg>
    <Caret className="ml-[5px]" />
    <svg className="ml-[25px]" width="16" height="16" viewBox="0 0 16 16"><path d="M0 0H16V16H0Z" fill="#4b4b4b" /><path d="M2 1.500H14V7.500H2ZM4 10.500H12.500V15H4Z" fill="#f1f1f1" /><path d="M5.500 11.500H7.500V14H5.500Z" fill="#4b4b4b" /></svg>
    <svg className="ml-[25px]" width="17" height="13" viewBox="0 0 17 13"><path d="M0 5L7 0V3C13 3 16 6 16 12C14 8 11 7.500 7 7.500V10.500Z" fill="#4b4b4b" /></svg>
    <Caret className="ml-[6px]" />
    <svg className="ml-[14px]" width="17" height="13" viewBox="0 0 17 13"><path d="M17 5L10 0V3C4 3 1 6 1 12C3 8 6 7.500 10 7.500V10.500Z" fill="#9a9a9a" /></svg>
    <Caret className="ml-[7px] text-[#8a8a8a]" />
    <svg className="ml-auto" width="16" height="15" viewBox="0 0 16 15"><path d="M0 0H16V11H14.500V15L10 11H0Z" fill="#4b4b4b" /><path d="M2.500 3H13.500M2.500 5.500H13.500M2.500 8H9" stroke="#f1f1f1" strokeWidth="1.100" /></svg>
    <svg className="ml-[25px]" width="16" height="16" viewBox="0 0 16 16"><circle cx="8" cy="8" r="7" fill="none" stroke="#4b4b4b" strokeWidth="1.800" /><path d="M8 4V8.500H12" fill="none" stroke="#4b4b4b" strokeWidth="1.600" /></svg>
    <span className="ml-[3px] text-[11px]">1</span>
    <span className="ml-[32px] w-[70px] whitespace-nowrap text-[11px] tracking-[-0.2px]">Dhruv Thakker</span>
    <Caret className="ml-[4px]" />
    <div className="ml-[24px] flex h-4 w-4 items-center justify-center rounded-full bg-[#666] text-[13px] font-bold text-white">?</div>
    <Caret className="ml-1 mr-[12px]" />
  </div>
);

export default function App() {
  return (
    <div className="relative flex h-[1080px] w-[1920px] flex-col overflow-hidden font-['Liberation_Sans',sans-serif]">
      <Defs />
      <TitleBar />
      <Tabs />
      <QuickBar />
      <div className="relative h-[901px]">
        <Scene />
        <Ribbon />
        <PanelBar title="BROWSER" open className="top-[68px]" />
        <Browser />
        <PanelBar title="COMMENTS" className="top-[872px]" />
        <NavBar />
      </div>
      <Timeline />
      <Taskbar />
    </div>
  );
}
